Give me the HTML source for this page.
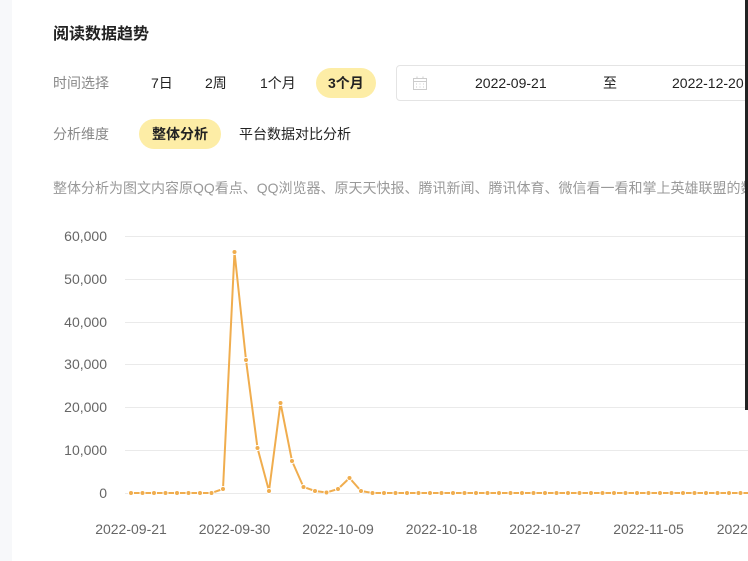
<!DOCTYPE html>
<html><head><meta charset="utf-8"><style>
body{margin:0;width:748px;height:561px;overflow:hidden;background:#fff;font-family:"Liberation Sans","Noto Sans CJK SC",sans-serif;position:relative}
.strip{position:absolute;left:0;top:0;width:12px;height:561px;background:#f7f8fa}
.bar{position:absolute;left:745px;top:0;width:3px;height:410px;background:#222}
.t{position:absolute;white-space:nowrap;line-height:20px}
.title{left:53px;top:25px;font-size:16px;font-weight:bold;color:#222}
.lab{font-size:14px;color:#888}
.opt{font-size:14px;color:#222}
.pill{background:#fdeda6;border-radius:15px;font-weight:bold;padding:0 13px;height:30px;line-height:30px}
.date{position:absolute;left:396px;top:65px;width:360px;height:36px;border:1px solid #e4e4e4;border-radius:4px;box-sizing:border-box}
.note{left:53px;top:178px;font-size:14px;color:#999}
</style></head><body>
<div class="strip"></div>
<div class="t title">阅读数据趋势</div>
<div class="t lab" style="left:53px;top:73px">时间选择</div>
<div class="t opt" style="left:151px;top:73px">7日</div>
<div class="t opt" style="left:205px;top:73px">2周</div>
<div class="t opt" style="left:260px;top:73px">1个月</div>
<div class="t opt pill" style="left:316px;top:68px;padding:0 12px">3个月</div>
<div class="date">
<svg style="position:absolute;left:16px;top:10px" width="14" height="14" viewBox="0 0 14 14" fill="none" stroke="#ccc" stroke-width="1"><rect x="0.5" y="2.5" width="13" height="11"/><line x1="0.5" y1="5.5" x2="13.5" y2="5.5"/><line x1="4" y1="0.5" x2="4" y2="3"/><line x1="10" y1="0.5" x2="10" y2="3"/><path d="M3 8h1M6.5 8h1M10 8h1M3 11h1M6.5 11h1M10 11h1"/></svg>
<div class="t" style="left:78px;top:7px;font-size:14px;color:#222">2022-09-21</div>
<div class="t" style="left:206px;top:7px;font-size:14px;color:#222">至</div>
<div class="t" style="left:275px;top:7px;font-size:14px;color:#222">2022-12-20</div>
</div>
<div class="t lab" style="left:53px;top:124px">分析维度</div>
<div class="t opt pill" style="left:139px;top:119px">整体分析</div>
<div class="t opt" style="left:239px;top:124px">平台数据对比分析</div>
<div class="t note">整体分析为图文内容原QQ看点、QQ浏览器、原天天快报、腾讯新闻、腾讯体育、微信看一看和掌上英雄联盟的数据</div>
<svg id="c" style="position:absolute;left:0;top:0" width="748" height="561"></svg>
<div class="bar"></div>
<script>
var s='',ys=[236,279,322,364,407,450,493],ls=['60,000','50,000','40,000','30,000','20,000','10,000','0'];
for(var i=0;i<7;i++){s+='<line x1="125" x2="748" y1="'+ys[i]+'.5" y2="'+ys[i]+'.5" stroke="#eaeaea"/>';s+='<text x="107" y="'+(ys[i]+5)+'" text-anchor="end" font-size="14" fill="#666" font-family="Liberation Sans">'+ls[i]+'</text>';}
var d=['2022-09-21','2022-09-30','2022-10-09','2022-10-18','2022-10-27','2022-11-05','2022-11-14'];
for(i=0;i<7;i++)s+='<text x="'+(131+103.5*i)+'" y="534" text-anchor="middle" font-size="14" fill="#666" font-family="Liberation Sans">'+d[i]+'</text>';
var v={8:489,9:252,10:360,11:448,12:491,13:403,14:461,15:487,16:491,17:492.5,18:489,19:478,20:491};
var p=[];for(i=0;i<56;i++){var x=131+11.5*i,y=v[i]||493;p.push(x+','+y);}
s+='<polyline points="'+p.join(' ')+'" fill="none" stroke="#f0ad4e" stroke-width="2"/>';
for(i=0;i<56;i++){var q=p[i].split(',');s+='<circle cx="'+q[0]+'" cy="'+q[1]+'" r="2.5" fill="#f0ad4e" stroke="#fff" stroke-width="1"/>';}
document.getElementById('c').innerHTML=s;
</script>
</body></html>
